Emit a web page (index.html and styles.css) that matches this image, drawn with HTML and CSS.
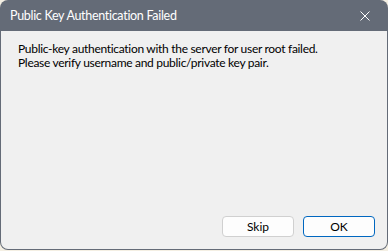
FILE: index.html
```html
<!DOCTYPE html>
<html lang="en">
<head>
  <meta charset="UTF-8">
  <title>Public Key Authentication Failed</title>
  <link rel="stylesheet" href="styles.css">
</head>
<body>
  <div class="dialog">
    <div class="titlebar">
      <span class="title">Public Key Authentication Failed</span>
      <button class="close" aria-label="close">
        <svg width="10" height="10" viewBox="0 0 10 10"><path d="M0.5 0.5 L9.5 9.5 M9.5 0.5 L0.5 9.5" stroke="#fff" stroke-width="1" fill="none"/></svg>
      </button>
    </div>
    <div class="content">
      <p class="message">Public-key authentication with the server for user root failed.<br>Please verify username and public/private key pair.</p>
      <div class="actions">
        <button class="btn">Skip</button>
        <button class="btn primary">OK</button>
      </div>
    </div>
  </div>
</body>
</html>
```

FILE: styles.css
```css
:root {
  --frame: #646b77;
  --face: #f0f0f0;
  --text: #000;
  --accent: #0067c0;
}
* { margin: 0; padding: 0; box-sizing: border-box; }
html, body { width: 388px; height: 251px; overflow: hidden; }
body { background: #f4efe3; font-family: "Lato", "Noto Sans", sans-serif; }
.dialog { width: 388px; height: 250px; display: flex; flex-direction: column; background: var(--frame); border-radius: 8px; overflow: hidden; }
.titlebar { height: 31px; display: flex; align-items: center; justify-content: space-between; padding: 0 0 0 10px; color: #fff; flex: none; }
.title { font-size: 12.5px; letter-spacing: -0.3px; }
.close { background: none; border: none; width: 46px; height: 31px; display: flex; align-items: center; justify-content: center; }
.content { flex: 1; margin: 0 1px 1px 1px; background: var(--face); border-radius: 0 0 7px 7px; display: flex; flex-direction: column; padding: 11px 12px 12px 17px; }
.message { font-size: 12px; line-height: 14px; letter-spacing: -0.3px; color: var(--text); flex: 1; }
.actions { display: flex; justify-content: flex-end; gap: 9px; }
.btn { width: 72px; height: 21px; font-family: inherit; font-size: 12px; background: #fdfdfd; border: 1px solid #d0d0d0; border-radius: 4px; color: #000; }
.btn.primary { border: 1px solid var(--accent); }
```
